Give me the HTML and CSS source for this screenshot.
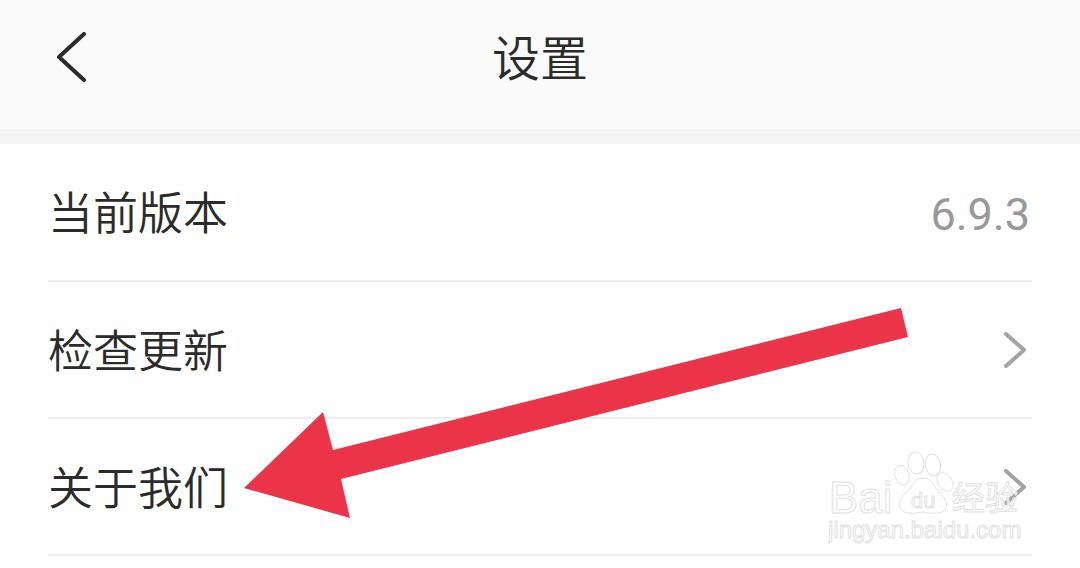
FILE: index.html
```html
<!DOCTYPE html>
<html lang="zh-CN">
<head>
    <meta charset="UTF-8">
    <meta name="viewport" content="width=device-width, initial-scale=1.0">
    <title>设置</title>
    <link rel="stylesheet" href="styles.css">
</head>
<body>
    <header class="top-bar">
        <svg class="back-icon" width="32" height="50" viewBox="0 0 32 50">
            <path d="M28 2 L3 25 L28 48" />
        </svg>
        <h1 class="top-title">设置</h1>
    </header>
    <div class="top-strip"></div>
    <ul class="menu">
        <li class="menu-item">
            <span class="menu-label">当前版本</span>
            <span class="menu-value">6.9.3</span>
        </li>
        <li class="menu-item">
            <span class="menu-label">检查更新</span>
            <svg class="next-icon" width="22" height="36" viewBox="0 0 22 36">
                <path d="M2 2 L20 18 L2 34" />
            </svg>
        </li>
        <li class="menu-item">
            <span class="menu-label">关于我们</span>
            <svg class="next-icon" width="22" height="36" viewBox="0 0 22 36">
                <path d="M2 2 L20 18 L2 34" />
            </svg>
        </li>
    </ul>

    <!-- red arrow drawn over the screenshot -->
    <svg class="arrow" width="1080" height="568" viewBox="0 0 1080 568">
        <polygon points="901,308 908,337 341,479 350,518 244,488 323,412 333,450" />
    </svg>

    <!-- watermark -->
    <svg class="watermark" width="200" height="100" viewBox="0 0 200 100">
        <g class="paw">
            <ellipse cx="74" cy="25" rx="7" ry="10" transform="rotate(-20 74 25)" />
            <ellipse cx="88" cy="13" rx="8" ry="11" transform="rotate(-8 88 13)" />
            <ellipse cx="105" cy="15" rx="7.5" ry="11" transform="rotate(-8 105 15)" />
            <ellipse cx="117" cy="32" rx="7" ry="10" transform="rotate(-35 117 32)" />
            <path d="M95 28 C85 28 84 38 78 43 C72 48 70 53 72 58 C74 64 85 64 95 62 C105 64 116 64 118 58 C120 52 116 47 112 43 C106 38 105 28 95 28 Z" />
        </g>
        <text class="wm-big" x="1" y="63">Bai</text>
        <text class="wm-du" x="83" y="58">du</text>
        <text class="wm-cn" x="124" y="60">经验</text>
        <text class="wm-url" x="0" y="88">jingyan.baidu.com</text>
    </svg>
</body>
</html>
```

FILE: styles.css
```css
body {
    margin: 0;
    height: 568px;
    overflow: hidden;
    position: relative;
    background-color: #fff;
    font-family: "Roboto", "Noto Sans CJK SC", sans-serif;
    color: #2b2b2b;
}
.top-bar {
    height: 129px;
    background-color: #fafafa;
    display: flex;
    align-items: center;
    justify-content: center;
    position: relative;
}
.back-icon {
    position: absolute;
    left: 56px;
    top: 32px;
}
.back-icon path {
    fill: none;
    stroke: #2b2b2b;
    stroke-width: 4;
    stroke-linecap: round;
    stroke-linejoin: round;
}
.top-title {
    margin: 0 0 9px;
    font-size: 48px;
    font-weight: 350;
    line-height: 60px;
}
.top-strip {
    height: 15px;
    background-color: #f5f5f5;
}
.menu {
    list-style: none;
    margin: 0 48px;
    padding: 0;
}
.menu-item {
    height: 136px;
    border-bottom: 2px solid #eeeeee;
    display: flex;
    align-items: center;
    justify-content: space-between;
}
.menu-item:nth-child(n+2) {
    height: 135px;
}
.menu-label {
    font-size: 45px;
    font-weight: 350;
    line-height: 60px;
    padding-top: 6px;
}
.menu-value {
    font-size: 45px;
    line-height: 60px;
    padding: 6px 2px 0 0;
    color: #999999;
}
.next-icon {
    margin-right: 6px;
}
.next-icon path {
    fill: none;
    stroke: #a3a3a3;
    stroke-width: 4;
    stroke-linecap: round;
    stroke-linejoin: round;
}
.arrow {
    position: absolute;
    left: 0;
    top: 0;
}
.arrow polygon {
    fill: #ec3448;
}
.watermark {
    position: absolute;
    left: 828px;
    top: 450px;
}
.watermark text, .paw ellipse, .paw path {
    fill: rgba(255,255,255,0.75);
    stroke: #e2e2e2;
    stroke-width: 1;
}
.wm-big {
    font-family: "Liberation Sans", sans-serif;
    font-size: 44px;
}
.wm-du {
    font-family: "Liberation Sans", sans-serif;
    font-size: 22px;
}
.wm-cn {
    font-family: "Noto Sans CJK SC", sans-serif;
    font-size: 33px;
}
.wm-url {
    font-family: "Liberation Sans", sans-serif;
    font-size: 24px;
}
```
